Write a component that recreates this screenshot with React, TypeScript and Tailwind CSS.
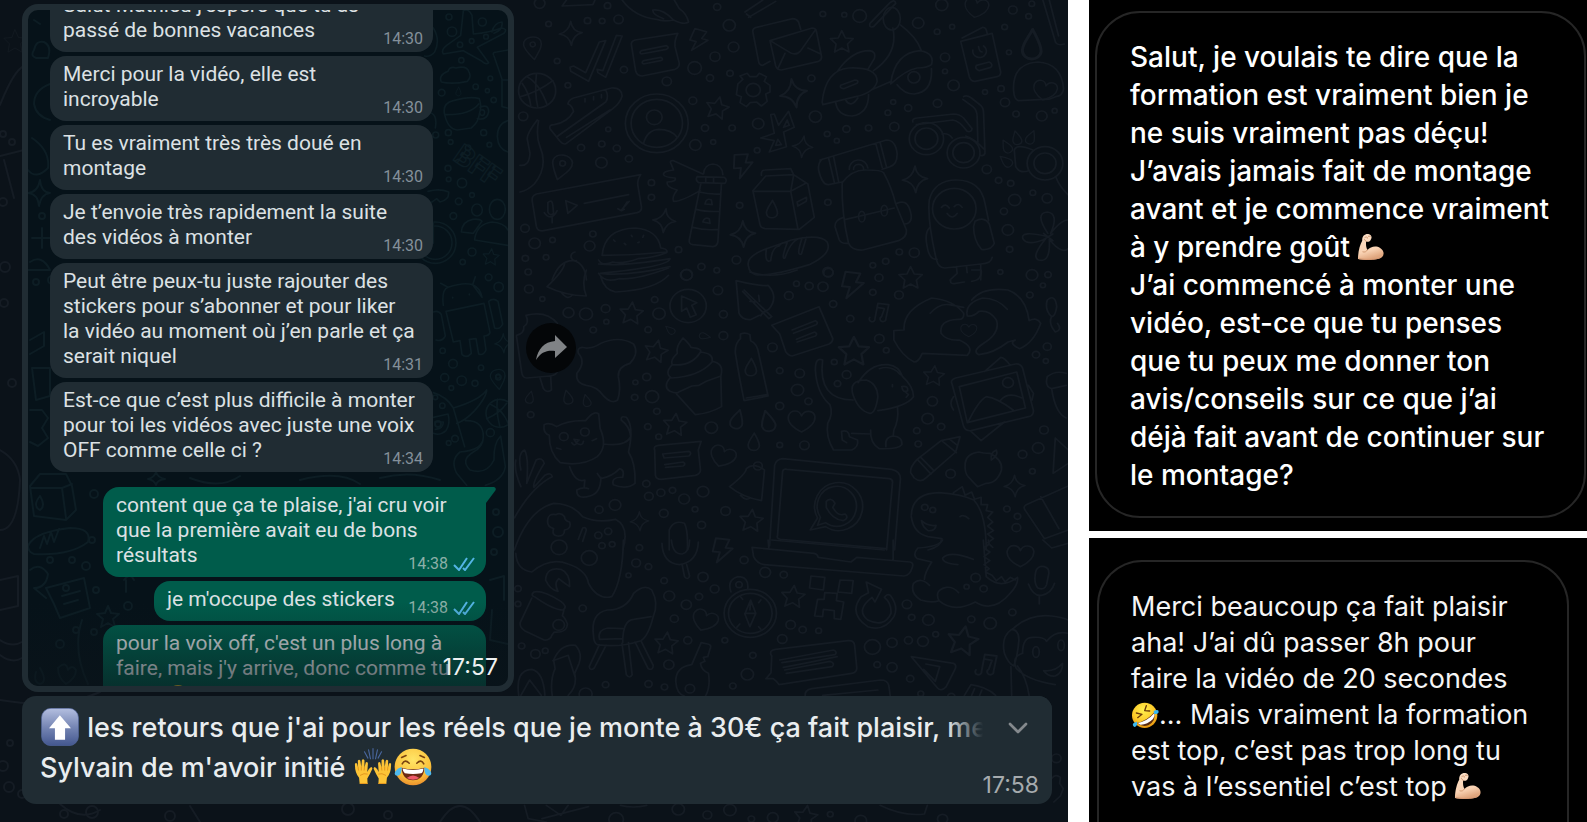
import React from 'react';
import { ChevronDown } from 'lucide-react';

interface Message {
  lines: string[];
  time: string;
}

const received: Message[] = [
  { lines: ["Salut Mathieu j'espère que tu as", 'passé de bonnes vacances'], time: '14:30' },
  { lines: ['Merci pour la vidéo, elle est', 'incroyable'], time: '14:30' },
  { lines: ['Tu es vraiment très très doué en', 'montage'], time: '14:30' },
  { lines: ['Je t’envoie très rapidement la suite', 'des vidéos à monter'], time: '14:30' },
  {
    lines: ['Peut être peux-tu juste rajouter des', 'stickers pour s’abonner et pour liker', 'la vidéo au moment où j’en parle et ça', 'serait niquel'],
    time: '14:31',
  },
  { lines: ['Est-ce que c’est plus difficile à monter', 'pour toi les vidéos avec juste une voix', 'OFF comme celle ci ?'], time: '14:34' },
];

/* ---------- wallpaper ---------- */

type Dot = [number, number, number];

function Dots({ items }: { items: Dot[] }) {
  return (
    <>
      {items.map(([x, y, r], i) => (
        <circle key={i} cx={x} cy={y} r={r} />
      ))}
    </>
  );
}

const shapes = {
  star: 'M0 -32 L10 -10 L32 -8 L16 8 L20 32 L0 20 L-20 32 L-16 8 L-32 -8 L-10 -10 Z',
  sparkle: 'M0 -36 Q4 -6 32 -2 Q6 4 2 36 Q-4 6 -32 2 Q-6 -4 0 -36 Z',
  heart: 'M0 34 C-24 22 -40 4 -36 -14 C-30 -34 -6 -34 0 -14 C8 -34 34 -32 37 -12 C38 6 22 22 0 34 Z',
  drop: 'M2 -27 C10 -10 16 0 16 12 C14 30 -14 30 -15 10 C-14 -4 -4 -14 2 -27 Z',
  bolt: 'M-16 -32 L18 -28 L8 -6 L26 -4 L-14 34 L-6 6 L-24 4 Z',
  pin: 'M-8 40 C-20 16 -30 0 -28 -16 C-22 -42 20 -40 27 -16 C30 4 10 20 -8 40 Z M-8 -10 A8 8 0 1 0 8 -10 A8 8 0 1 0 -8 -10',
  note: 'M-22 18 A8 8 0 1 0 -8 22 L0 -24 L30 -20 L22 22 A8 8 0 1 1 10 16 L18 -8 L-2 -12',
};

type Mark = [keyof typeof shapes, number, number, number?, number?];

function Marks({ items }: { items: Mark[] }) {
  return (
    <>
      {items.map(([name, x, y, turn = 0, size = 1], i) => (
        <path key={i} d={shapes[name]} transform={`translate(${x} ${y}) rotate(${turn}) scale(${size})`} />
      ))}
    </>
  );
}

const upperDots: Dot[] = [
  [55, 10, 15], [80, 72, 8], [189, 62, 9], [230, 63, 8], [276, 58, 13], [245, 17, 9], [552, 21, 10], [586, 76, 17], [598, 141, 15], [546, 170, 14],
  [489, 204, 19], [411, 244, 13], [532, 234, 10], [588, 220, 9], [104, 183, 8], [134, 256, 8], [291, 209, 10], [848, 42, 8], [908, 44, 7], [951, 48, 19],
  [1115, 69, 16], [1168, 95, 8], [1210, 80, 7], [1181, 15, 17], [1380, 30, 12], [1424, 49, 8], [1357, 81, 8], [1433, 11, 8], [1190, 172, 13], [1190, 214, 7],
  [1214, 256, 16], [1369, 157, 7], [1302, 276, 7], [1347, 266, 9], [1358, 307, 13], [1389, 342, 9], [1461, 348, 15], [1497, 332, 7], [816, 235, 10], [484, 302, 11],
  [518, 384, 10], [594, 384, 9], [541, 426, 7], [491, 435, 16], [667, 371, 16], [827, 350, 17], [664, 451, 8], [860, 402, 8], [914, 387, 10], [976, 384, 9],
  [887, 422, 7], [1048, 380, 13], [1030, 338, 8], [1087, 324, 10], [1045, 306, 7], [1169, 310, 12], [247, 388, 7], [229, 432, 9], [271, 445, 10], [171, 443, 10],
  [305, 476, 10], [228, 488, 16], [9, 349, 13], [368, 548, 9], [368, 592, 9], [615, 616, 9], [862, 607, 9], [14, 685, 12], [41, 730, 16], [91, 720, 8],
  [204, 702, 9], [195, 738, 15], [15, 775, 9], [73, 772, 8], [23, 816, 9], [444, 749, 9], [508, 800, 10], [551, 811, 8], [606, 780, 12], [467, 824, 16],
  [1062, 756, 9], [1104, 758, 14], [1024, 784, 9], [988, 796, 8], [862, 816, 14], [1307, 508, 13], [1340, 541, 9], [1374, 550, 9], [1385, 600, 17], [1436, 578, 8],
  [1476, 595, 14], [1355, 634, 10], [1366, 690, 16], [1371, 748, 9], [1345, 816, 7],
];

const middleDots: Dot[] = [
  [52, 57, 12], [89, 87, 7], [485, 15, 16], [572, 61, 13], [161, 128, 15], [209, 132, 18], [263, 116, 12], [265, 155, 7], [398, 89, 9], [410, 131, 17],
  [380, 179, 9], [229, 180, 9], [587, 133, 11], [587, 197, 12], [722, 232, 13], [767, 77, 12], [788, 41, 8], [823, 48, 11], [861, 50, 14], [889, 102, 10],
  [876, 8, 13], [998, 67, 9], [1015, 23, 11], [1070, 75, 12], [936, 146, 10], [1016, 206, 13], [1035, 241, 8], [892, 276, 8], [926, 314, 12], [901, 341, 9],
  [797, 310, 13], [791, 360, 17], [742, 302, 9], [821, 394, 10], [742, 408, 11], [742, 525, 8], [810, 526, 13], [345, 337, 7], [376, 321, 11], [343, 382, 9],
  [391, 380, 18], [404, 424, 9], [379, 470, 9], [409, 500, 8], [554, 473, 17], [57, 434, 9], [1430, 75, 9], [1436, 15, 16], [1480, 14, 9], [1466, 46, 7],
  [1478, 230, 11], [1447, 254, 10], [1474, 273, 7], [1162, 394, 14], [1149, 446, 16], [1119, 482, 9], [1186, 470, 10], [1123, 522, 9], [1469, 480, 12], [1453, 534, 16],
  [1410, 553, 12], [1212, 611, 13], [1437, 604, 8], [375, 641, 10], [382, 679, 12], [415, 668, 11], [447, 661, 9], [479, 687, 15], [531, 665, 16], [509, 718, 8],
  [423, 730, 12], [593, 723, 13], [527, 765, 11], [289, 705, 16], [245, 719, 11], [243, 796, 10], [270, 784, 10], [1367, 717, 9], [1396, 739, 9], [1393, 773, 12],
];

const lowerDots: Dot[] = [
  [135, 22, 22], [218, 54, 22], [253, 17, 9], [281, 13, 8], [356, 23, 9], [347, 69, 12], [381, 80, 9], [326, 106, 7], [200, 205, 10], [22, 146, 9],
  [22, 192, 8], [644, 60, 11], [702, 97, 15], [753, 104, 10], [531, 111, 14], [563, 147, 12], [520, 170, 10], [424, 122, 9], [438, 168, 15], [485, 194, 14],
  [452, 236, 11], [489, 301, 11], [591, 301, 8], [772, 254, 13], [805, 269, 10], [849, 272, 8], [749, 297, 13], [668, 346, 9], [653, 403, 17], [613, 438, 9],
  [1092, 193, 13], [1105, 232, 9], [1151, 240, 16], [1171, 283, 8], [997, 321, 22], [1051, 308, 14], [1096, 301, 11], [1136, 304, 15], [1010, 374, 9], [1051, 382, 14],
  [1101, 416, 10], [1130, 461, 8], [1269, 238, 10], [1321, 250, 17], [1382, 217, 10], [1303, 146, 10], [1281, 113, 13], [1256, 140, 7], [32, 318, 9], [70, 342, 13],
  [97, 332, 8], [263, 434, 9], [208, 462, 18], [381, 432, 10], [425, 441, 9], [437, 374, 14], [1214, 470, 10], [1503, 655, 13], [463, 808, 17], [543, 825, 12],
  [605, 810, 17], [664, 837, 9], [723, 833, 15], [881, 823, 8], [1190, 837, 14], [292, 838, 20], [965, 842, 16],
];

function Wallpaper() {
  return (
    <svg className="absolute left-0 top-0 h-[822px] w-[1068px]" viewBox="0 0 1068 822" fill="none" stroke="#151c24" strokeLinecap="round" strokeLinejoin="round" aria-hidden="true">
      <svg x="520" y="0" width="560" height="280" viewBox="0 0 1568 840" preserveAspectRatio="none" strokeWidth="5" overflow="visible">
        <Dots items={upperDots} />
        <Marks
          items={[
            ['sparkle', 142, 100], ['bolt', 500, 120, 10], ['star', 901, 124], ['star', 553, 322, 12], ['sparkle', 766, 280, -8, 1.2], ['sparkle', 791, 440, 8, 0.9],
            ['sparkle', 404, 662, 8], ['sparkle', 624, 702, 0, 1.1], ['sparkle', 1106, 538, 0, 1.1], ['bolt', 624, 496, -10, 1.1], ['pin', 38, 142, -15, 0.9], ['pin', 118, 500, 8],
            ['heart', 1278, 22, 10, 0.9], ['drop', 1432, 134, 0, 1.7], ['drop', 705, 628], ['drop', 1390, 414, -15, 0.8], ['drop', 1430, 412, 20, 0.8], ['drop', 1362, 440, -30, 0.8],
            ['drop', 1360, 484, -50, 0.8], ['heart', 1470, 270, 12, 0.9],
          ]}
        />
        <path d="M140 202 L150 198 L184 218 L222 126 L240 122 L192 244 L142 214 Z M216 208 L232 212 L270 106 L286 108 L240 232 L218 218 Z" />
        <path d="M312 135 Q310 124 322 120 L442 100 Q432 120 434 140 L446 190 Q446 204 434 208 L342 228 Q328 228 324 214 Z M340 152 L410 137 Q420 143 410 148 L340 162 Q332 158 340 152 Z M346 182 L394 172 Q404 178 394 182 L346 192 Q338 188 346 182 Z" />
        <path d="M286 0 Q320 50 382 58 Q400 66 430 60 Q460 76 472 66 Q466 40 446 26 L432 0 M430 60 Q400 26 372 30 Q370 44 402 56 M118 18 L130 0 M118 18 L204 14 L210 0 M630 36 L680 0 M640 52 L716 4 M634 42 L646 52" />
        <path d="M700 184 L680 196 Q670 196 668 184 L652 96 Q650 86 662 82 L764 56 Q774 56 780 66 L786 88 M700 122 L818 84 Q828 84 830 94 L844 168 Q846 180 836 184 L732 210 Q720 210 716 198 Z M704 124 L760 160 Q776 166 786 152 L828 88 M722 206 L742 160 M842 162 L806 144" />
        <circle cx="48" cy="272" r="52" />
        <path d="M20 230 Q54 250 76 314 M2 290 Q50 276 92 242 M46 222 Q40 280 50 322 M6 250 Q26 280 30 316" />
        <circle cx="383" cy="370" r="88" /><circle cx="383" cy="370" r="72" /><circle cx="376" cy="352" r="22" />
        <path d="M346 430 Q356 390 388 388 Q424 388 440 412" />
        <path d="M84 386 Q80 374 96 374 Q134 366 150 334 Q146 316 134 312 Q136 300 150 294 L256 264 Q284 262 286 288 Q280 310 260 326 L130 430 Q122 436 112 424 Z M106 408 L240 306 Q250 290 240 270 M130 412 L252 330 M182 296 v10 M206 290 v10 M228 284 v10" />
        <path d="M610 252 L624 238 L616 228 L636 220 L644 230 L662 230 L670 220 L690 230 L684 244 L700 256 L700 276 L688 282 L692 304 L676 318 L662 306 L644 308 L634 320 L616 308 L620 290 L606 284 Z" />
        <circle cx="653" cy="270" r="20" />
        <path d="M702 344 L712 342 L724 376 L752 334 L768 382 L738 396 L746 440 L698 456 L712 422 L674 414 L712 400 Z M738 382 L748 360 L754 376 Z M716 436 L722 418 L732 434 Z" />
        <path d="M846 306 Q856 210 920 204 Q1000 200 1000 244 Q992 278 940 290 L848 314 Z M890 212 Q930 152 978 152 Q998 154 992 176 L974 208 M990 212 Q1060 160 1044 84 M1064 74 Q1110 110 1124 152 M988 268 L1040 244 M1038 250 Q1050 158 1120 152 Q1162 160 1152 194 Q1140 204 1112 204 Q1080 210 1038 252 M980 70 L1036 8 Q1050 -4 1052 10 L990 80 Q976 84 980 70 M898 256 L938 240 Q950 240 944 250 L906 266 Q894 264 898 256 M884 308 Q890 348 930 348 Q976 340 976 284 M1056 254 Q1076 282 1104 282 Q1156 276 1152 206 M912 300 Q926 326 946 294" />
        <ellipse cx="1041" cy="56" rx="24" ry="34" /><circle cx="1103" cy="232" r="17" />
        <path d="M1234 124 L1322 100 L1346 216 Q1346 228 1336 230 L1274 244 Q1262 244 1258 230 Z M1238 114 L1296 82 Q1306 82 1308 100 M1278 196 L1314 186 Q1326 194 1318 202 L1286 212 Q1272 206 1278 196 M1268 150 a19 19 0 1 0 30 -12 M1284 140 q2 16 10 16 M1464 0 L1500 128 Q1506 138 1524 132 M1482 0 L1508 108" />
        <path d="M1382 272 Q1378 190 1450 186 Q1516 190 1522 266 Q1520 288 1500 290 Q1480 300 1466 298 L1396 302 Q1384 300 1382 272" />
        <circle cx="1138" cy="416" r="48" /><circle cx="1138" cy="416" r="32" /><circle cx="1242" cy="458" r="46" /><circle cx="1242" cy="458" r="30" />
        <path d="M1100 366 Q1096 356 1112 354 L1214 342 Q1230 342 1242 354 L1266 386 Q1264 398 1252 394 Q1230 362 1212 360 L1110 374 M1182 402 Q1200 398 1210 414 M1242 290 Q1250 284 1264 294 L1290 316 Q1298 324 1298 340 L1302 460 Q1298 470 1288 466 M1240 298 L1268 320 Q1280 330 1280 350 L1282 426 M1248 408 Q1270 414 1302 450" />
        <path d="M840 480 L1026 420 Q1052 420 1056 462 Q1056 494 1036 500 L1014 508 M902 546 L864 554 Q846 556 836 510 Q834 488 846 478 M864 474 L880 546 M878 470 L892 544 M996 430 L1014 502 M1008 426 L1026 500 M902 548 Q930 508 970 510 Q1012 510 1018 518 Q1040 560 1052 612 L1082 690 Q1084 712 1060 722 L960 750 Q930 752 920 730 Q900 640 902 548 M912 658 L1048 624 M906 652 Q880 660 882 680 L894 720 Q900 732 920 730 M1056 610 Q1080 598 1090 624 Q1106 670 1076 672 M922 508 A26 26 0 0 1 974 504 M934 508 A14 14 0 0 1 962 506" />
        <ellipse cx="957" cy="650" rx="9" ry="16" /><ellipse cx="1020" cy="632" rx="9" ry="16" />
        <path d="M652 572 L688 528 L766 524 L806 552 L824 652 L782 688 L686 686 Q674 684 672 674 Z M654 574 L758 574 L800 550 M758 574 L778 686 M758 574 L766 526 M676 526 Q674 510 686 510 L758 506 L766 524 M776 606 L802 592 Q804 604 798 606 L778 618 Z" />
        <path d="M514 522 Q516 494 540 492 Q566 494 568 524 M496 530 L572 532 Q582 540 574 550 L500 548 Q490 540 496 530 M520 532 v16 M542 532 v16 M506 552 L474 720 Q472 732 484 734 L540 740 Q552 738 554 726 L564 552 M502 576 Q530 584 562 582 M494 628 Q520 636 558 634 M484 682 Q516 692 556 688 M518 612 Q522 592 536 600 L538 614 Z M512 666 Q516 650 530 656 L532 670 Z M512 522 L430 482 Q416 480 424 494 L430 510 Q400 514 402 524 Q404 532 434 534 Q440 544 412 546 Q408 560 440 570 Q424 592 430 604 Q450 606 504 572" />
        <path d="M34 602 Q32 588 46 582 L338 524 Q328 540 330 556 L340 620 Q342 634 328 638 L66 692 Q50 696 46 680 Z M180 610 L304 584 M128 602 L160 616 L134 640 Z M78 608 Q90 596 92 616 L94 640 Q84 650 78 636 Z M68 638 Q88 666 104 632 M90 652 v16 M274 626 L284 632 L300 606 M284 630 L306 604 M284 632 L292 628" />
        <path d="M230 766 Q236 686 324 684 Q386 690 394 744 Q412 746 412 756 Q320 766 230 766 M220 780 Q230 800 260 786 Q290 792 330 776 Q380 772 410 758 M220 792 Q280 800 420 776 Q418 800 224 820 M224 820 Q300 830 420 800 M262 720 l4 4 M312 706 l2 4 M292 730 l4 4 M346 706 l-2 6 M330 728 l4 -2" />
        <path d="M640 800 Q630 770 690 746 L760 720 Q840 700 860 726 Q876 760 810 794 Q700 830 660 824 Q642 818 640 800 M690 746 Q684 790 702 782 Q706 740 726 738 Q730 726 748 728 Q730 780 742 774 Q760 716 790 714 Q772 770 788 762 L802 712 M90 840 Q110 780 150 782 Q182 790 186 840 M154 756 a12 12 0 1 0 4 26" />
        <path d="M1166 780 Q1140 660 1146 600 Q1160 540 1222 540 Q1290 540 1302 610 L1312 662 M1146 684 Q1132 700 1140 740 Q1146 780 1168 778 M1166 780 Q1172 804 1190 804 L1290 792 Q1320 790 1322 772 M1274 664 Q1300 648 1314 672 L1328 730 Q1320 752 1292 748 Q1270 720 1270 680 Z M1180 622 q12 -14 22 2 M1216 620 q12 -14 22 2 M1196 640 q14 22 28 0 M1222 800 L1224 820 L1204 840 M1250 798 L1252 818 M1290 794 v46" />
        <circle cx="1216" cy="626" r="61" /><circle cx="1470" cy="490" r="50" /><circle cx="1470" cy="490" r="31" />
        <path d="M1436 450 Q1390 430 1384 450 L1388 500 Q1400 522 1424 512 M1500 530 Q1510 560 1540 590 M1478 700 Q1440 640 1476 636 Q1510 640 1486 700 Q1530 640 1550 670 M1478 710 Q1400 690 1408 716 Q1420 740 1472 716 Q1430 770 1452 780 Q1486 790 1482 718 Q1520 770 1540 740 M1466 700 L1492 722 M1464 720 L1492 702 M48 360 Q20 400 20 416 L28 460 Q26 500 0 496 M52 362 Q44 410 56 440 Q80 500 40 552 Q20 572 0 576" />
      </svg>

      <svg x="510" y="270" width="570" height="280" viewBox="0 0 1568 840" preserveAspectRatio="none" strokeWidth="5" overflow="visible">
        <Dots items={middleDots} />
        <Marks
          items={[
            ['star', 334, 128, 5], ['star', 402, 242, 12], ['star', 454, 462, 5], ['star', 664, 750, 5], ['star', 946, 242, 0, 1.3], ['star', 1166, 316, 5, 0.9], ['star', 1102, 22],
            ['bolt', 942, 44, 0, 1.2], ['note', 1012, 124], ['drop', 54, 382, 10, 0.7], ['drop', 158, 382, -15, 0.8], ['drop', 210, 392, -15, 0.7], ['drop', 440, 180, -50, 0.6],
            ['drop', 536, 198, 100, 0.6], ['drop', 624, 448, 12, 1.1], ['drop', 708, 454, -15, 1.2], ['drop', 670, 516, 0, 1], ['drop', 662, 292], ['heart', 802, 452], ['heart', 585, 558, 20, 0.95],
            ['heart', 1262, 180, 0, 0.6], ['sparkle', 1388, 648, 0, 0.9], ['sparkle', 356, 754, 0, 0.8],
          ]}
        />
        <circle cx="490" cy="108" r="50" />
        <path d="M472 78 L514 98 L500 106 L512 134 L496 142 L486 114 L472 124 Z" />
        <path d="M622 32 Q690 50 710 46 Q740 80 712 118 Q690 130 690 138 M622 32 L630 130 Q640 152 664 148 L686 136 M644 60 L720 140 L712 146 L640 64 M660 94 L676 96 M684 76 L686 94" />
        <path d="M720 166 L850 110 L888 206 Q888 216 878 222 L776 258 Q764 256 758 244 L742 192 Z M776 180 L840 152 Q850 158 842 164 L780 190 M788 208 L838 186 Q848 192 840 198 L790 216" />
        <path d="M102 50 Q150 0 150 -20 M102 50 Q150 76 210 78 Q196 40 210 0 M140 66 Q160 94 172 74 M244 10 Q260 40 300 26 Q350 30 436 -6 M250 22 Q260 60 290 66 Q400 60 436 16 M660 6 Q720 28 790 0 M1212 30 Q1210 44 1226 40 L1250 36 M1270 0 L1296 0 Q1300 30 1270 34" />
        <path d="M198 232 Q184 234 188 250 Q210 276 184 310 Q180 340 210 346 Q240 350 256 376 Q280 404 296 390 Q306 360 298 320 Q296 290 330 280 Q356 250 340 222 Q300 196 250 220 Q220 240 198 232 M44 136 Q100 120 130 160 L130 300 Q130 316 110 318 L46 324 Q34 324 32 306 L18 200 M18 196 Q40 190 38 170 Q54 160 44 136 M82 322 L92 356 Q100 370 114 360 L112 318" />
        <path d="M460 248 Q456 230 476 204 Q492 220 498 232 Q530 236 524 246 Q560 250 556 274 Q590 280 580 318 M460 250 Q440 270 446 284 Q500 290 524 246 M446 284 Q424 310 444 324 Q520 320 556 276 M440 324 Q420 350 440 364 Q460 372 464 366 L500 348 L520 346 L540 334 L580 318 L582 410 Q550 430 510 434 L458 372" />
        <path d="M634 206 L634 192 Q648 186 660 194 L662 212 Q680 220 684 250 L710 378 L644 392 Q632 330 620 250 Q618 220 634 206 M650 384 L706 374" />
        <path d="M860 270 Q840 260 840 300 Q844 370 880 404 Q890 430 874 460 Q868 500 890 540 L940 540 Q960 530 956 510 L934 500 Q932 478 912 484 L914 510 L926 518 M860 270 Q846 390 944 390 M944 376 Q930 330 980 330 Q1010 340 1012 380 Q1006 430 990 430 Q960 424 944 376 M958 338 Q990 280 1040 284 Q1070 288 1080 320 Q1110 350 1110 380 Q1090 410 1012 422 M1016 296 Q1050 284 1074 314 M1066 412 Q1070 450 1056 480 L1054 498 Q1080 500 1078 524 Q1070 538 1016 536 Q990 520 992 480 M940 490 L992 492 M1034 530 Q1030 500 1056 498 M1078 350 Q1096 346 1094 362 Q1080 370 1078 350 M1088 366 L1096 374 L1090 382 M1052 344 v6" />
        <path d="M1056 182 Q1070 180 1084 180 Q1080 120 1160 84 Q1220 90 1248 130 Q1250 150 1232 148 Q1180 150 1186 190 Q1200 212 1236 210 Q1280 232 1258 256 Q1180 252 1134 250 Q1124 276 1112 276 Q1080 260 1056 210 Z M1156 130 Q1180 100 1208 104 L1248 112 M1258 138 Q1250 100 1300 84 Q1340 84 1368 118 M1270 90 Q1300 50 1370 60 Q1420 80 1428 152 Q1450 140 1460 160 Q1440 220 1402 236 Q1370 220 1390 210 L1370 216 Q1330 250 1290 254 Q1270 244 1300 222 Q1350 190 1338 150 Q1320 120 1290 124 Q1276 140 1258 138" />
        <path d="M1216 342 Q1210 330 1226 324 L1390 282 Q1404 280 1410 294 L1440 422 Q1440 438 1426 440 L1268 482 Q1254 484 1248 470 Z M1236 350 L1394 306 L1418 414 L1258 458 Z M1260 456 Q1290 390 1310 380 Q1340 384 1384 420 M1350 390 Q1370 364 1408 384 M1306 304 L1350 262 Q1360 262 1376 286 M1268 484 L1296 512 L1360 456 M1426 346 L1440 370 L1436 390 M1220 380 Q1206 400 1220 420" />
        <circle cx="1370" cy="338" r="15" />
        <path d="M108 496 Q90 490 94 464 Q110 456 128 470 Q160 450 208 452 Q230 420 244 432 L248 476 Q270 530 240 560 Q200 590 138 578 Q108 550 108 496 M258 522 Q320 530 332 500 Q330 470 306 450 Q304 436 320 442 Q342 470 326 546 Q346 580 344 640 Q320 660 284 644 Q278 620 310 622 Q316 600 302 596 Q280 620 250 626 L240 610 M250 622 Q250 670 220 678 Q182 690 184 660 Q200 650 216 656 M164 590 Q180 640 206 630 Q204 650 204 654 M170 518 Q176 530 184 520 Q200 530 202 514 M176 508 L190 510 L182 518 Z M128 534 l12 4 M226 512 l12 -6" />
        <circle cx="148" cy="500" r="12" /><circle cx="206" cy="486" r="12" />
        <path d="M398 540 Q394 528 408 526 L526 514 L518 540 L524 600 Q524 612 510 616 L416 628 Q402 628 400 616 Z M420 552 L492 544 Q502 550 492 558 L424 564 Z M426 584 L476 576 Q486 582 476 588 L428 592 M604 650 Q650 610 650 596 Q670 576 700 600 Q696 650 692 692 Q640 682 604 650 M634 676 Q650 694 660 684" />
        <circle cx="682" cy="588" r="12" />
        <path d="M714 828 L728 586 Q732 568 750 566 L1050 598 Q1074 604 1074 626 L1058 840 M736 796 L750 604 Q752 596 762 598 L1044 626 Q1054 628 1052 640 L1036 840 M736 796 Q732 806 744 808 L1034 836 M846 744 L826 780 L868 770 A66 72 0 1 0 846 744 M854 742 L846 766 L868 758 A54 60 0 1 0 854 742 M870 694 Q884 680 894 700 L888 712 Q900 736 914 734 L922 732 Q934 744 916 752 Q886 748 870 712 Z" />
        <path d="M1102 608 Q1100 590 1120 568 L1186 512 L1238 500 L1226 546 L1146 622 Q1130 640 1112 624 Z M1190 514 L1228 548 M1122 570 L1158 612 M1130 562 L1166 602 M1210 508 L1228 524 M1252 580 Q1256 550 1290 546 Q1300 550 1320 550 Q1356 570 1352 600 Q1340 640 1310 640 L1286 650 Q1270 632 1262 622 Q1250 610 1252 580 M1324 570 Q1320 548 1338 540 Q1344 556 1324 570" />
        <path d="M1104 736 Q1106 670 1180 668 Q1240 672 1276 690 Q1310 730 1310 840 M1220 668 L1244 650 L1252 676 L1270 666 L1278 688 L1296 682 L1296 704 L1314 704 L1310 722 L1328 726 L1314 742 L1328 756 L1314 768 L1330 782 L1314 792 L1330 806 L1314 818 L1328 832 M1104 740 Q1110 790 1150 800 L1188 806 Q1186 830 1150 840 M1132 752 Q1150 770 1172 766 Q1170 784 1150 782 Q1134 770 1132 752 M1238 740 q10 -8 24 6" />
        <circle cx="1141" cy="712" r="9" /><circle cx="1163" cy="720" r="8" />
        <path d="M1536 648 L1420 704 Q1410 710 1418 722 L1470 806 L1536 780 M1460 680 L1510 776 M1500 504 L1494 610 L1536 580 M1500 504 L1536 540 M12 744 Q60 650 116 620 Q114 606 96 616 L66 652 M66 652 Q60 640 94 580 Q90 560 72 570 L46 640 M30 650 Q10 600 16 570 M30 600 Q20 550 40 540 Q52 560 46 640 M12 840 Q50 720 120 700 Q170 700 200 740 Q240 760 290 748 Q330 770 310 840 M104 748 Q106 730 126 734 Q140 726 150 740 Q150 752 164 756 Q170 776 150 780 Q150 800 130 798 Q114 796 120 776 Q100 770 104 748 M188 808 L200 774 Q208 770 210 780 L200 814 M438 840 L438 780 Q450 748 480 760 Q490 780 488 840 M1478 90 Q1500 70 1504 110 Q1500 140 1490 140 Q1470 120 1478 90 M1490 140 Q1480 160 1500 186 Q1520 180 1506 160 M1478 320 Q1500 300 1530 310 M1478 320 Q1470 350 1490 356 L1530 346 M1490 356 Q1500 430 1530 444" />
      </svg>

      <svg x="510" y="540" width="570" height="282" viewBox="0 0 1568 846" preserveAspectRatio="none" strokeWidth="5" overflow="visible">
        <Dots items={lowerDots} />
        <Marks
          items={[
            ['star', 779, 168, 5], ['star', 430, 308, 5], ['star', 1246, 300, 10, 1.3], ['star', 814, 828, 8], ['heart', 1404, 46], ['heart', 536, 240, 20, 0.95], ['note', 1306, 370, 0, 1.1], ['bolt', 584, 30, 0, 1.1],
          ]}
        />
        <path d="M16 40 Q18 90 60 96 Q110 50 160 72 Q210 90 216 130 Q240 180 280 170 Q310 120 312 0 M666 22 L836 40 Q846 42 848 52 L938 66 L954 52 L1100 66 Q1112 68 1106 84 Q1100 106 1084 108 L700 74 Q680 72 670 50 Z M710 0 L712 24 M1054 0 L1054 62 M720 0 L1030 30" />
        <path d="M418 10 Q420 70 466 74 Q516 66 518 6 M444 0 Q448 44 474 42 Q494 36 494 0 M474 76 L480 110 Q490 122 494 108 L486 74 M98 120 Q100 80 140 88 Q166 100 164 140 Q150 130 134 116 Q120 130 132 154 Q110 150 98 120 M66 156 Q90 150 140 184 Q160 200 146 210 Q120 210 70 172 Q54 166 66 156 M60 174 L28 248 Q26 262 40 272 L94 300 Q110 302 116 284 L122 276 Q156 280 158 252 Q150 230 144 228 L148 212" />
        <circle cx="134" cy="255" r="16" />
        <path d="M230 290 Q220 220 268 210 Q320 210 340 160 Q370 130 390 150 Q410 190 394 230 Q380 290 360 302 Q300 324 240 314 Q230 306 230 290 M246 296 Q240 270 270 264 L310 266 M310 296 L246 298 M310 308 Q310 240 340 238 L388 230 M264 316 L232 384 Q220 394 218 380 L246 314 M308 310 L320 404 Q330 418 336 404 L326 308 M344 306 L380 386 Q394 392 394 376 L360 302" />
        <circle cx="661" cy="220" r="72" /><circle cx="661" cy="220" r="60" /><circle cx="630" cy="134" r="9" />
        <path d="M608 156 Q596 120 626 110 Q658 110 654 146 M662 180 L676 220 L660 260 L646 222 Z M646 220 L676 220 M662 180 L660 210 M634 170 l6 8 M690 180 l-6 8 M690 268 l-6 -8 M624 262 l8 -10 M828 108 L866 112 L862 150 L824 144 Z M908 120 L944 122 L940 160 L902 156 Z M866 158 L900 160 L898 182 L918 186 L910 238 L892 236 L892 212 L862 208 L860 230 L838 228 L846 178 L864 178 Z" />
        <path d="M980 126 L1022 148 L1004 186 L996 172 Q950 210 984 240 Q1030 264 1048 220 Q1050 190 1030 172 Q1038 160 1046 166 Q1070 200 1056 230 Q1030 276 984 260 Q930 220 966 170 L986 158 Z M1190 0 Q1180 20 1122 24 Q1106 44 1120 56 L1160 66 Q1140 100 1140 118 M1154 136 Q1130 110 1110 130 Q1100 160 1130 180 Q1160 190 1180 182 Q1166 150 1200 142 Q1220 140 1234 158 M1180 182 Q1220 220 1280 186 Q1330 220 1376 160 Q1400 130 1396 112 Q1350 150 1310 110 L1302 0 M1316 0 L1318 12 L1304 24 L1320 36 L1304 50 L1320 62 L1304 74 L1318 86 L1308 96 L1326 106 L1338 122 L1352 110 L1362 126 L1376 112 L1390 120 M1232 74 Q1190 70 1190 54 Q1210 30 1274 58" />
        <path d="M1446 96 Q1450 76 1470 80 Q1484 84 1482 102 L1476 134 Q1470 152 1452 144 Q1440 130 1446 96 M1426 132 Q1440 170 1462 166 Q1490 160 1498 130 M1456 168 v24 M1466 0 L1490 24 L1536 10" />
        <path d="M720 348 Q710 332 730 328 L930 302 Q946 300 948 316 L954 384 Q954 398 940 400 L740 434 Q734 424 724 416 L704 416 L718 398 Z M742 360 L890 330 Q902 336 894 344 L748 368 M752 382 L820 368 L900 350 M756 390 L880 364 Q896 370 886 380 L760 400 M812 468 Q810 450 830 446 L1020 420 Q1038 420 1042 436 L1046 468 M860 466 L1012 450 M1104 350 L1220 370 Q1230 376 1224 388 L1200 440 Q1186 456 1176 444 Z M1138 388 L1170 424 L1182 380 L1144 372" />
        <path d="M544 312 L526 308 L500 374 Q456 380 456 424 Q458 462 480 468 M544 312 Q556 314 550 328 L544 350 L532 352 L536 364 L524 370 Q526 390 546 400 Q552 440 538 468 M116 466 Q110 420 124 386 L120 360 Q140 310 180 316 Q200 340 190 370 L178 400 Q186 440 160 466 M118 362 L160 346 L180 414 M24 466 Q14 390 60 388 Q92 396 96 466 M30 466 L54 420 L86 466 M1250 466 L1268 434 Q1310 440 1336 466 M1270 466 L1278 446 M1292 466 L1298 450" />
        <circle cx="495" cy="446" r="13" />
        <path d="M1360 340 Q1350 290 1380 268 Q1400 270 1400 300 Q1396 350 1386 378 Q1370 370 1360 340 M1378 380 L1380 466 M1396 378 Q1420 410 1428 466 M1384 266 Q1430 220 1490 228 Q1520 232 1536 240 M1410 340 Q1410 290 1440 292 Q1470 290 1476 304 Q1500 270 1536 280 M1410 340 Q1380 350 1392 384 Q1420 420 1500 434 M1468 392 Q1500 396 1520 370 Q1520 400 1500 408 Q1480 410 1468 392" />
        <ellipse cx="1447" cy="336" rx="9" ry="16" /><ellipse cx="1516" cy="316" rx="9" ry="16" />
        <path d="M40 796 L50 836 L100 846 M88 836 L216 800 M100 796 L140 826 L160 796 M304 796 Q340 806 376 796 M1018 796 Q1080 830 1140 822 L1148 796 M1490 716 Q1500 700 1514 712 L1512 730 L1522 746 L1514 768 L1496 786" />
      </svg>

      <svg x="0" y="0" width="530" height="822" viewBox="0 0 530 822" strokeWidth="2" overflow="visible">
        <Marks items={[['star', 15, 41, 0, 0.35]]} />
        <Dots items={[[3, 134, 3], [12, 142, 3], [3, 202, 4], [5, 267, 5], [4, 303, 4], [12, 383, 4], [10, 743, 3], [3, 766, 5], [9, 787, 5], [22, 794, 4], [64, 814, 4], [92, 812, 6], [170, 816, 5], [348, 809, 6], [388, 815, 4]]} />
        <path d="M0 105 Q14 70 24 66 M0 156 L24 150 M4 160 L14 198 M0 450 Q18 460 20 480 Q18 530 0 530 M0 580 L18 576 V606 L0 610 M0 640 Q12 648 22 642 M0 655 Q12 664 22 658 M0 700 Q60 710 100 692 M60 804 Q80 822 100 810 M190 806 L200 822 M440 822 Q460 790 480 822" />
      </svg>
    </svg>
  );
}

const pictureDots: Dot[] = [
  [438, 424, 3], [42, 216, 3], [52, 280, 4], [72, 560, 3], [86, 566, 4], [66, 588, 3], [92, 540, 3], [50, 560, 3], [76, 630, 3], [60, 644, 4], [94, 632, 3],
  [128, 606, 4], [96, 590, 3], [498, 532, 5], [494, 552, 3], [496, 512, 3], [94, 494, 4], [36, 282, 3],
];

const stripDots: Dot[] = [
  [87, 51, 9], [187, 66, 12], [96, 95, 14], [120, 134, 8], [155, 123, 7], [198, 110, 7], [124, 181, 8], [211, 235, 7], [167, 260, 8], [65, 278, 10],
  [202, 272, 6], [221, 300, 8], [47, 405, 9], [85, 398, 9], [191, 398, 9], [92, 426, 7], [208, 434, 7], [144, 443, 8], [84, 505, 9], [86, 538, 7],
  [126, 549, 14], [156, 585, 7], [116, 604, 10], [100, 648, 10], [156, 756, 12], [128, 786, 8], [206, 832, 10], [236, 861, 14], [68, 1052, 8], [99, 1091, 13],
  [74, 1133, 12], [125, 1142, 14], [165, 1150, 9], [94, 1164, 7], [183, 1103, 8], [235, 1132, 8], [211, 1298, 12], [105, 1316, 10], [86, 1329, 7], [67, 1217, 8],
  [46, 1192, 7],
];

// faint drawings behind the bubbles inside the shared picture
function PictureDoodles() {
  return (
    <svg className="absolute left-0 top-0 h-[676px] w-[480px]" viewBox="28 10 480 676" fill="none" stroke="#0d1d24" strokeWidth="2" strokeLinejoin="round" strokeLinecap="round" aria-hidden="true">
      <svg x="420" y="0" width="160" height="500" viewBox="0 0 480 1500" strokeWidth="5">
        <Dots items={stripDots} />
        <Marks items={[['star', 213, 770, 5, 0.75], ['sparkle', 250, 1030, 0, 0.8], ['pin', 236, 1136, -15, 0.8], ['drop', 115, 275, 0, 0.5]]} />
        <path d="M130 32 Q146 24 156 46 L160 102 Q210 98 244 84 Q264 86 252 100 L172 142 L206 188 Q200 196 186 184 L130 152 L70 162 Q62 150 80 136 L122 106 Z M216 96 Q222 68 246 66 Q250 90 222 100 M40 84 Q62 120 44 156 Q30 172 14 168" />
        <path d="M64 246 Q54 226 84 214 Q90 198 108 204 Q140 196 146 214 Q156 230 142 244 Q96 254 64 246 M74 344 Q66 310 100 302 Q150 288 178 296 Q186 320 178 342 M74 344 Q84 388 112 390 L154 384 Q176 366 178 342 M74 344 Q150 346 176 312 M180 322 Q206 310 206 336 Q200 362 172 356 M184 330 q14 -2 8 14 q-10 6 -12 -4 M220 164 Q218 156 230 156 L264 150 M222 168 L246 238 L246 320 L262 324 M246 240 H264 M264 362 Q232 372 232 410 Q234 448 264 456 M24 336 Q54 340 46 384" />
        <text x="96" y="478" transform="rotate(35 96 478)" fontSize="84" fontFamily="Roboto, sans-serif" fontWeight="900" strokeWidth="4">BFF</text>
        <path d="M24 574 Q60 564 86 576 Q88 600 60 606 L50 596 L30 610 M164 718 Q170 672 216 666 Q252 668 264 690 M164 720 L264 736 M124 696 Q126 664 158 658 Q180 656 186 664 L160 700 Z" />
        <ellipse cx="171" cy="630" rx="16" ry="18" /><ellipse cx="232" cy="628" rx="24" ry="30" />
        <circle cx="46" cy="728" r="62" /><circle cx="46" cy="728" r="50" />
        <path d="M40 670 V730 M70 916 Q64 870 84 862 L62 850 M84 862 Q130 846 158 854 L166 830 M158 854 Q180 862 186 892 Z M98 892 v2 M148 882 v2 M78 934 L192 910 L210 998 Q206 1008 192 1008 L198 1050 Q190 1068 176 1062 L168 1016 L148 1018 L154 1060 Q140 1076 126 1064 L120 1022 L100 1026 Z M206 904 Q220 892 234 904 L248 972 Q240 990 224 984 Z M40 936 Q56 930 64 944 L76 1008 Q66 1026 48 1020" />
        <path d="M40 1178 Q80 1190 100 1224 Q180 1200 200 1170 Q200 1190 164 1232 Q136 1262 110 1270 M100 1224 L134 1340 M40 1252 L84 1242 Q92 1270 78 1292 Q60 1308 40 1300 M44 1266 h26 q0 20 -24 22 M136 1262 Q190 1260 190 1310 Q190 1350 120 1356 Q90 1380 110 1420 L140 1456 M196 1456 Q250 1440 256 1400 L242 1308 Q220 1330 222 1380 Q200 1426 150 1410 Q120 1380 160 1356 Q190 1340 190 1310" />
        <circle cx="240" cy="1240" r="42" />
        <path d="M210 1212 Q250 1230 264 1270 M200 1256 Q240 1240 260 1210 M232 1198 Q228 1240 240 1282" />
      </svg>
      <path d="M34 20 L40 24 M34 50 Q36 40 44 42 Q52 46 48 58 H36 Q30 56 34 50 M50 84 Q34 90 34 104 Q36 116 50 120 M32 138 Q50 150 48 168 Q36 180 28 170 M40 180 Q41 192 50 193 Q41 194 39 206 Q38 194 28 193 Q38 192 40 180 M42 228 v20 M32 238 h18 M30 262 Q42 254 50 270 H28 M30 340 L44 332 V346 L30 354 M32 368 h18 v28 l-14 4 Z M30 410 h12 l6 8 -6 10 6 10 -10 8 -8 -4 M30 486 L40 474 H66 L72 486 L76 510 L66 520 L34 516 Z M30 488 H62 L66 518 M62 488 L72 484 M40 496 q6 10 0 14 q-8 -4 0 -14" />
      <path d="M28 546 Q34 532 70 528 Q92 528 88 542 Q70 556 34 554 Q28 552 28 546 M40 548 l4 -12 3 8 4 -12 3 10 5 -13 M46 588 L84 578 L90 608 L60 618 L54 604 Z M62 596 l18 -5 M64 604 l14 -4 M30 570 q10 -8 18 4 q-2 14 -14 14 l12 10 M108 606 l3 7 8 1 -6 5 2 8 -7 -4 -7 4 2 -8 -6 -5 8 -1 Z M36 672 q-3 10 4 12 q8 -2 0 -16 M58 668 q8 -8 10 2 q4 -6 8 0 q0 8 -10 14 q-8 -6 -8 -16 M82 620 Q72 650 88 684" />
      <path d="M156 472 q2 6 9 7 q-8 1 -9 6 q-2 -5 -8 -6 q6 -1 8 -7 M190 478 Q220 490 240 476 M300 480 Q340 470 360 484 M380 478 Q410 470 440 480 M124 580 q6 -8 10 0 M126 592 v-12 M490 580 l14 -4 v24 M492 610 L490 640 L508 644" />
      <Dots items={pictureDots} />
    </svg>
  );
}

/* ---------- emojis ---------- */

function Biceps() {
  return (
    <svg className="inline-block size-[28px] align-[-4px]" viewBox="0 0 84 86" role="img" aria-label="biceps">
      <defs>
        <linearGradient id="skin" x1="0" y1="0" x2="0.3" y2="1">
          <stop offset="0" stopColor="#fbe0c8" />
          <stop offset="0.7" stopColor="#f9d3b4" />
          <stop offset="1" stopColor="#e0a67e" />
        </linearGradient>
      </defs>
      <path d="M2 80 C2 58 8 36 15 24 C14 10 22 2 34 3 C43 5 46 12 42 19 C39 27 33 28 27 26 C26 36 27 44 31 52 C41 41 58 38 70 46 C84 54 84 70 72 77 C52 85 22 84 2 80 Z" fill="url(#skin)" />
      <path d="M31 52 C28 58 22 60 17 58 M23 14 C28 10 32 12 31 16 M27 26 L22 20 M40 10 L34 10" fill="none" stroke="#c98c63" strokeWidth="2.5" strokeLinecap="round" />
      <path d="M6 79 C24 82 52 83 70 76" fill="none" stroke="#d59872" strokeWidth="3" strokeLinecap="round" />
    </svg>
  );
}

function Rofl() {
  return (
    <svg className="inline-block size-[28px] align-[-5px]" viewBox="0 0 84 84" role="img" aria-label="mort de rire">
      <defs>
        <radialGradient id="face-a" cx="0.45" cy="0.3" r="0.75">
          <stop offset="0" stopColor="#fff04e" />
          <stop offset="0.6" stopColor="#fcc726" />
          <stop offset="1" stopColor="#e08a0c" />
        </radialGradient>
      </defs>
      <circle cx="41" cy="43" r="38" fill="url(#face-a)" />
      <path d="M18 66 Q48 60 70 34 Q76 60 52 73 Q32 79 18 66 Z" fill="#5b2b10" />
      <path d="M20 66 Q50 60 70 36 Q73 46 66 54 Q48 72 28 71 Z" fill="#fff" />
      <path d="M16 36 L33 40 L20 50 M46 14 L41 29 L56 30" fill="none" stroke="#6b3a0b" strokeWidth="4" strokeLinecap="round" strokeLinejoin="round" />
      <path d="M68 30 Q84 22 83 34 Q80 42 69 38 Z M18 62 Q20 76 10 78 Q2 72 8 66 Z" fill="#38b8f2" />
    </svg>
  );
}

function Joy() {
  return (
    <svg className="inline-block h-[38px] w-10 align-[-9px]" viewBox="0 0 120 120" role="img" aria-label="pleure de rire">
      <defs>
        <radialGradient id="face-b" cx="0.5" cy="0.3" r="0.75">
          <stop offset="0" stopColor="#ffe567" />
          <stop offset="0.65" stopColor="#fbc23c" />
          <stop offset="1" stopColor="#e8862a" />
        </radialGradient>
      </defs>
      <circle cx="60" cy="60" r="58" fill="url(#face-b)" />
      <path d="M24 62 Q60 72 96 62 Q94 100 60 102 Q26 100 24 62 Z" fill="#6c2a14" />
      <path d="M27 65 Q60 74 93 65 Q92 78 86 80 Q60 84 34 80 Q28 76 27 65 Z" fill="#fff" />
      <path d="M40 95 Q60 78 80 95 Q60 106 40 95 Z" fill="#ee5a6a" />
      <path d="M26 50 Q34 34 48 48 M72 48 Q86 34 94 50 M24 30 L38 24 M82 24 L96 30" fill="none" stroke="#7a4310" strokeWidth="5" strokeLinecap="round" />
      <path d="M24 60 Q26 84 12 88 Q-2 86 4 74 Q10 64 24 60 Z M96 60 Q94 84 108 88 Q122 86 116 74 Q110 64 96 60 Z" fill="#4fb9ee" />
    </svg>
  );
}

function RaisedHands() {
  return (
    <svg className="inline-block h-[38px] w-10 align-[-9px]" viewBox="0 0 120 120" role="img" aria-label="mains levées">
      <g id="raised">
        <path d="M18 114 L16 94 Q2 78 3 50 Q6 44 10 50 L13 62 L12 40 Q16 34 20 40 L23 60 L25 38 Q29 32 33 39 L33 62 L37 46 Q42 42 44 49 L42 76 Q46 64 54 60 Q60 62 57 68 Q50 84 42 96 L43 114 Z" fill="#fdc436" />
        <path d="M13 62 L14 70 M23 60 L23 70 M33 62 L32 70 M20 86 Q32 78 42 82 M20 112 H42" fill="none" stroke="#dc8a19" strokeWidth="2.5" strokeLinecap="round" />
      </g>
      <use href="#raised" transform="translate(120 0) scale(-1 1)" />
      <path d="M60 2 V34 M46 6 L52 34 M74 6 L68 34 M33 12 L44 32 M87 12 L76 32" stroke="#49679f" strokeWidth="3.5" strokeLinecap="round" />
    </svg>
  );
}

function UpArrow() {
  return (
    <svg className="inline-block h-[38px] w-10 align-[-9px]" viewBox="2 2 117 116" role="img" aria-label="flèche vers le haut">
      <defs>
        <linearGradient id="key" x1="0" y1="0" x2="0" y2="1">
          <stop offset="0" stopColor="#b4bfe0" />
          <stop offset="0.5" stopColor="#7686b4" />
          <stop offset="1" stopColor="#43578f" />
        </linearGradient>
      </defs>
      <rect x="4" y="3" width="113" height="114" rx="29" fill="url(#key)" stroke="#52659b" strokeWidth="2" />
      <path d="M60 24 L94 64 H76 V99 H45 V64 H27 Z" fill="#fff" />
    </svg>
  );
}

/* ---------- bubbles ---------- */

function Ticks() {
  return (
    <svg className="h-[14px] w-[22px]" viewBox="0 0 22 14" fill="none" stroke="#53b4e4" strokeWidth="2" role="img" aria-label="Lu">
      <path d="M1 8 L6 13 L14 1 M10 11 L12 13 L21 1" />
    </svg>
  );
}

function ReceivedBubble({ message }: { message: Message }) {
  return (
    <div className="relative w-[383px] rounded-2xl bg-[#202c33] px-[13px] pt-[6px] pb-[9px]">
      {message.lines.map((line) => (
        <p key={line} className="whitespace-nowrap">{line}</p>
      ))}
      <time className="absolute right-[10px] bottom-[5px] text-base leading-4 text-[#84909a]">{message.time}</time>
    </div>
  );
}

function SentBubble({ message, tail }: { message: Message; tail?: boolean }) {
  return (
    <div className={`relative self-end rounded-2xl bg-[#005c4b] px-[13px] pt-[6px] pb-[9px] ${message.lines.length > 1 ? 'w-[383px]' : 'w-[332px]'} ${tail ? 'mt-[11px] rounded-tr-none' : ''}`}>
      {message.lines.map((line) => (
        <p key={line} className="whitespace-nowrap">{line}</p>
      ))}
      {tail && (
        <svg className="absolute top-0 left-full h-4 w-[10px]" viewBox="0 0 10 16" fill="#005c4b" aria-hidden="true">
          <path d="M0 0 H8 Q11 1 9 4 L0 16 Z" />
        </svg>
      )}
      <div className="absolute right-[11px] bottom-[5px] flex items-center gap-[5px] text-base leading-4 text-[#8cb0a8]">
        <time>{message.time}</time>
        <Ticks />
      </div>
    </div>
  );
}

function SharedPicture() {
  return (
    <div className="relative h-[688px] w-[492px] shrink-0 overflow-hidden rounded-[16px] border-[6px] border-[#202c33] bg-[#061219]">
      <PictureDoodles />
      <div className="relative -mt-[23px] flex flex-col gap-1 px-[22px] font-[Roboto,sans-serif] text-[21px] leading-[25px] text-[#dce1e4]">
        {received.map((message) => (
          <ReceivedBubble key={message.lines[0]} message={message} />
        ))}
        <SentBubble message={{ lines: ["content que ça te plaise, j'ai cru voir", 'que la première avait eu de bons', 'résultats'], time: '14:38' }} tail />
        <SentBubble message={{ lines: ["je m'occupe des stickers"], time: '14:38' }} />
        <div className="relative w-[383px] self-end rounded-t-2xl bg-[#005c4b] px-[13px] pt-[6px] pb-8">
          <p className="whitespace-nowrap">pour la voix off, c'est un plus long à</p>
          <p className="whitespace-nowrap">faire, mais j'y arrive, donc comme tu</p>
          <svg className="ml-[51px] size-[22px]" viewBox="0 0 22 22" aria-hidden="true">
            <circle cx="11" cy="14" r="10" fill="#f2c230" />
          </svg>
        </div>
      </div>
      <div className="absolute inset-x-0 bottom-0 h-[84px] bg-linear-to-t from-[#0b141a]/60 to-transparent" />
      <time className="absolute right-[10px] bottom-[6px] text-[23px] leading-[26px] text-[#eef1f2]">17:57</time>
    </div>
  );
}

export default function App() {
  return (
    <div className="grid h-screen grid-cols-[1068fr_498fr] gap-[21px] overflow-hidden bg-white font-[Inter,sans-serif]">
      <main className="relative min-w-0 overflow-hidden bg-[#0b1219]">
        <Wallpaper />
        <div className="relative flex flex-col gap-1 pt-1 pr-4 pl-[22px]">
          <div className="flex items-center gap-3">
            <SharedPicture />
            <button type="button" aria-label="Transférer" className="flex size-[50px] items-center justify-center rounded-full bg-[#040608]">
              <svg className="h-[26px] w-[31px]" viewBox="0 0 31 26" fill="#808386" aria-hidden="true">
                <path d="M19 0 L31 12 L19 23 V16 C11 15 5 17 0 25 C2 14 8 7 19 6 Z" />
              </svg>
            </button>
          </div>

          <div className="relative h-[108px] rounded-[14px] bg-[#202c33] px-[18px] pt-[12px] text-[27px] leading-10 font-medium text-[#e9edef]">
            <p className="overflow-hidden whitespace-nowrap">
              <UpArrow /> les retours que j'ai pour les réels que je monte à 30€ ça fait plaisir, merci
            </p>
            <p className="whitespace-nowrap">
              Sylvain de m'avoir initié <RaisedHands /><Joy />
            </p>
            <div className="absolute top-0 right-0 flex h-16 w-[106px] items-center justify-end rounded-tr-[14px] bg-linear-to-r from-transparent to-[#202c33] to-35% pr-[18px]">
              <button type="button" aria-label="Options du message">
                <ChevronDown className="size-8 text-[#84898d]" />
              </button>
            </div>
            <time className="absolute right-[13px] bottom-[6px] text-[23px] leading-[26px] font-normal text-[#a6abae]">17:58</time>
          </div>
        </div>
      </main>

      <aside className="flex min-w-0 flex-col gap-[7px] text-white">
        <section className="h-[531px] shrink-0 bg-black pt-[11px] pr-px pl-[6px]">
          <div className="h-[507px] rounded-[45px] border-2 border-[#262626] pt-[25px] pl-[33px] text-[28px] leading-[38px] font-medium whitespace-nowrap">
            <p>Salut, je voulais te dire que la<br />formation est vraiment bien je<br />ne suis vraiment pas déçu!</p>
            <p>J’avais jamais fait de montage<br />avant et je commence vraiment<br />à y prendre goût <Biceps /></p>
            <p>J’ai commencé à monter une<br />vidéo, est-ce que tu penses<br />que tu peux me donner ton<br />avis/conseils sur ce que j’ai<br />déjà fait avant de continuer sur<br />le montage?</p>
          </div>
        </section>
        <section className="grow bg-black pt-[22px] pr-[18px] pl-2">
          <div className="h-full rounded-t-[45px] border-2 border-b-0 border-[#262626] pt-[27px] pl-[32px] text-[27px] leading-[36px] whitespace-nowrap text-[#f5f5f5]">
            <p>
              Merci beaucoup ça fait plaisir<br />aha! J’ai dû passer 8h pour<br />faire la vidéo de 20 secondes<br /><Rofl />... Mais vraiment la formation<br />est top, c’est pas trop long tu<br />vas à l’essentiel c’est top <Biceps />
            </p>
          </div>
        </section>
      </aside>
    </div>
  );
}
